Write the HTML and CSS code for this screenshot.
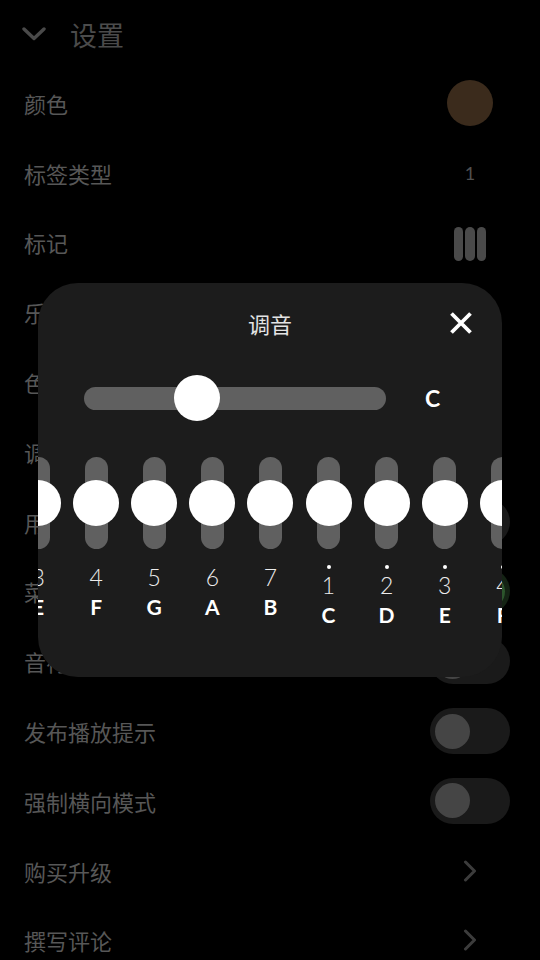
FILE: index.html
```html
<!DOCTYPE html>
<html lang="zh-CN">
<head>
<meta charset="utf-8">
<title>设置</title>
<link rel="stylesheet" href="styles.css">
</head>
<body>
<div class="screen">
  <div class="settings">
    <div class="header">
      <svg class="chev-down" viewBox="0 0 24 14" width="24" height="14"><polyline points="2,2 12,11.5 22,2" fill="none" stroke="#4a4a4a" stroke-width="3.4" stroke-linecap="round" stroke-linejoin="round"/></svg>
      <span class="header-title">设置</span>
    </div>
    <div class="row"><span class="label">颜色</span><span class="slot"><span class="swatch"></span></span></div>
    <div class="row"><span class="label">标签类型</span><span class="slot"><span class="value">1</span></span></div>
    <div class="row"><span class="label">标记</span><span class="slot"><span class="bars"><i></i><i></i><i></i></span></span></div>
    <div class="row"><span class="label">乐谱样式</span><span class="slot"></span></div>
    <div class="row"><span class="label">色彩主题</span><span class="slot"></span></div>
    <div class="row"><span class="label">调音</span><span class="slot"></span></div>
    <div class="row"><span class="label">用手指弹奏</span><span class="slot"><span class="toggle"><span class="knob"></span></span></span></div>
    <div class="row"><span class="label">菜单显示</span><span class="slot"><span class="toggle on"><span class="knob"></span></span></span></div>
    <div class="row"><span class="label">音符震动</span><span class="slot"><span class="toggle"><span class="knob"></span></span></span></div>
    <div class="row"><span class="label">发布播放提示</span><span class="slot"><span class="toggle"><span class="knob"></span></span></span></div>
    <div class="row"><span class="label">强制横向模式</span><span class="slot"><span class="toggle"><span class="knob"></span></span></span></div>
    <div class="row"><span class="label">购买升级</span><span class="slot"><svg class="chev-right" viewBox="0 0 14 22" width="14" height="22"><polyline points="2.5,2 11.5,11 2.5,20" fill="none" stroke="#3c3c3c" stroke-width="3" stroke-linecap="round" stroke-linejoin="round"/></svg></span></div>
    <div class="row"><span class="label">撰写评论</span><span class="slot"><svg class="chev-right" viewBox="0 0 14 22" width="14" height="22"><polyline points="2.5,2 11.5,11 2.5,20" fill="none" stroke="#3c3c3c" stroke-width="3" stroke-linecap="round" stroke-linejoin="round"/></svg></span></div>
  </div>

  <div class="modal">
    <div class="modal-head">
      <span class="modal-title">调音</span>
      <svg class="close" viewBox="0 0 24 24" width="24" height="24"><path d="M2.5 2.5 L21.5 21.5 M21.5 2.5 L2.5 21.5" fill="none" stroke="#ffffff" stroke-width="3.8"/></svg>
    </div>
    <div class="tune">
      <div class="track"><span class="thumb"></span></div>
      <span class="key-name">C</span>
    </div>
    <div class="keys">
      <div class="key"><div class="key-track"><span class="key-knob"></span></div><div class="key-label"><span class="num">3</span><span class="note">E</span></div></div>
      <div class="key"><div class="key-track"><span class="key-knob"></span></div><div class="key-label"><span class="num">4</span><span class="note">F</span></div></div>
      <div class="key"><div class="key-track"><span class="key-knob"></span></div><div class="key-label"><span class="num">5</span><span class="note">G</span></div></div>
      <div class="key"><div class="key-track"><span class="key-knob"></span></div><div class="key-label"><span class="num">6</span><span class="note">A</span></div></div>
      <div class="key"><div class="key-track"><span class="key-knob"></span></div><div class="key-label"><span class="num">7</span><span class="note">B</span></div></div>
      <div class="key"><div class="key-track"><span class="key-knob"></span></div><div class="key-label"><span class="dot"></span><span class="num">1</span><span class="note">C</span></div></div>
      <div class="key"><div class="key-track"><span class="key-knob"></span></div><div class="key-label"><span class="dot"></span><span class="num">2</span><span class="note">D</span></div></div>
      <div class="key"><div class="key-track"><span class="key-knob"></span></div><div class="key-label"><span class="dot"></span><span class="num">3</span><span class="note">E</span></div></div>
      <div class="key"><div class="key-track"><span class="key-knob"></span></div><div class="key-label"><span class="dot"></span><span class="num">4</span><span class="note">F</span></div></div>
    </div>
  </div>
</div>
</body>
</html>
```

FILE: styles.css
```css
* { box-sizing: border-box; }
html, body { margin: 0; padding: 0; }
body {
  background: #000;
  width: 540px;
  height: 960px;
  overflow: hidden;
  font-family: "Noto Sans CJK SC", "Noto Sans", sans-serif;
}
.screen { position: relative; width: 540px; height: 960px; background: #000; }

/* background settings list (dimmed) */
.header {
  height: 68px;
  display: flex;
  align-items: center;
  padding-left: 22px;
}
.chev-down { display: block; }
.header-title {
  margin-left: 24px;
  font-size: 27px;
  line-height: 1;
  color: #4b4b4b;
}
.row {
  height: 69.8px;
  display: flex;
  align-items: center;
  justify-content: space-between;
  padding: 0 30px 0 24px;
}
.label {
  font-size: 22px;
  line-height: 1;
  color: #575757;
}
.slot {
  width: 80px;
  display: flex;
  align-items: center;
  justify-content: center;
}
.swatch {
  width: 46px;
  height: 46px;
  border-radius: 50%;
  background: #3b2b1c;
}
.value {
  font-family: "Lato", "Noto Sans", sans-serif;
  font-size: 18px;
  line-height: 1;
  color: #505050;
}
.bars { display: flex; gap: 2px; margin-top: 4px; }
.bars i {
  display: block;
  width: 9.5px;
  height: 34px;
  border-radius: 5px;
  background: #4a4a4a;
}
.toggle {
  position: relative;
  display: flex;
  align-items: center;
  width: 80px;
  height: 46px;
  border-radius: 23px;
  background: #1a1a1a;
  padding-left: 5px;
}
.toggle .knob {
  width: 35px;
  height: 35px;
  border-radius: 50%;
  background: #454545;
}
.toggle.on {
  justify-content: flex-end;
  padding: 0 5px 0 0;
  background: #142314;
}
.toggle.on .knob {
  background: #1e1e1e;
  border: 3px solid #2c552c;
}
.chev-right { display: block; }

/* tuning dialog */
.modal {
  position: absolute;
  left: 38px;
  top: 283px;
  width: 464px;
  height: 394px;
  border-radius: 40px;
  background: #1c1c1c;
  overflow: hidden;
}
.modal-head {
  height: 80px;
  display: grid;
  grid-template-columns: 1fr auto 1fr;
  align-items: center;
}
.modal-title {
  grid-column: 2;
  font-size: 22px;
  line-height: 1;
  color: #e4e4e4;
}
.close {
  grid-column: 3;
  justify-self: end;
  margin-right: 29px;
  display: block;
}
.tune {
  height: 70px;
  display: flex;
  align-items: center;
  padding-left: 46px;
}
.track {
  position: relative;
  width: 302px;
  height: 23px;
  border-radius: 12px;
  background: #606060;
}
.thumb {
  position: absolute;
  left: 90px;
  top: 50%;
  width: 46px;
  height: 46px;
  margin-top: -23px;
  border-radius: 50%;
  background: #fff;
}
.key-name {
  margin-left: 39px;
  font-family: "Lato", "Noto Sans", sans-serif;
  font-weight: 700;
  font-size: 23px;
  line-height: 1;
  color: #fff;
}
.keys {
  display: flex;
  align-items: flex-start;
  margin-left: -29px;
  padding-top: 24px;
}
.key {
  flex: 0 0 58.1px;
  display: flex;
  flex-direction: column;
  align-items: center;
}
.key-track {
  position: relative;
  width: 23px;
  height: 92px;
  border-radius: 12px;
  background: #606060;
}
.key-knob {
  position: absolute;
  left: 50%;
  top: 50%;
  width: 46px;
  height: 46px;
  margin: -23px 0 0 -23px;
  border-radius: 50%;
  background: #fff;
}
.key-label {
  margin-top: 14px;
  display: flex;
  flex-direction: column;
  align-items: center;
  font-family: "Lato", "Noto Sans", sans-serif;
  color: #fff;
}
.dot {
  width: 4px;
  height: 4px;
  border-radius: 50%;
  background: #fff;
  margin-top: 2px;
  margin-bottom: 2px;
}
.num {
  font-weight: 300;
  font-size: 23px;
  line-height: 28px;
  color: #ececec;
}
.note {
  margin-top: 3px;
  font-weight: 700;
  font-size: 21px;
  line-height: 25px;
}
```
